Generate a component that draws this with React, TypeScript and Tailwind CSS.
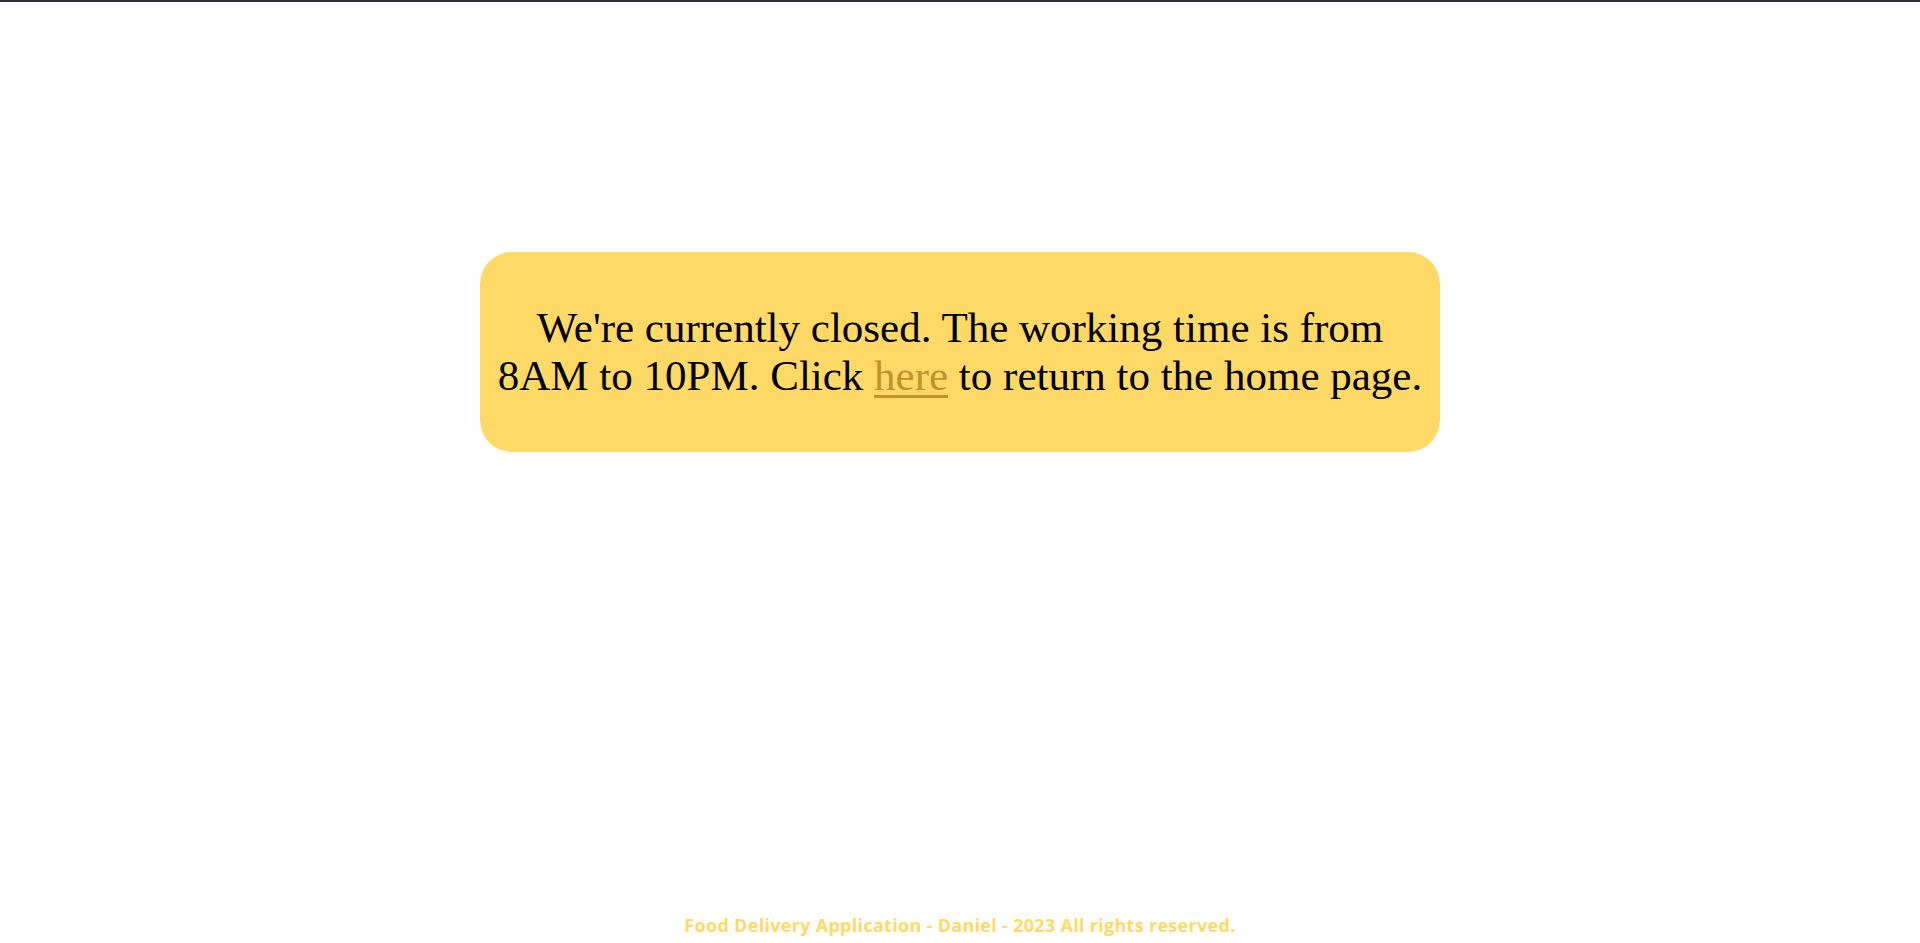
export default function App() {
  return (
    <div className="flex h-screen flex-col bg-white">
      <div className="h-[2px] w-full bg-[#2b2d3a]" />
      <main className="flex flex-1 justify-center pt-[250px]">
        <div className="flex h-[200px] w-[960px] items-center justify-center rounded-[32px] bg-[#ffd966] px-3">
          <p
            className="text-center text-[43px] leading-[48px] text-black"
            style={{ fontFamily: '"Liberation Serif", serif' }}
          >
            We're currently closed. The working time is from
            <br />
            8AM to 10PM. Click{" "}
            <a href="#" className="text-[#c1912c] underline decoration-[3px] underline-offset-[5px]">
              here
            </a>{" "}
            to return to the home page.
          </p>
        </div>
      </main>
      <footer
        className="pb-[6px] text-center text-[18px] leading-[24px] font-bold tracking-[0.3px] text-[#ffd966]"
        style={{ fontFamily: '"Open Sans", sans-serif' }}
      >
        Food Delivery Application - Daniel - 2023 All rights reserved.
      </footer>
    </div>
  );
}
